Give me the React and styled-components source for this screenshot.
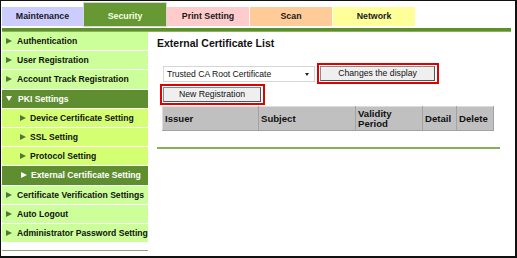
import React from 'react';
import styled, { createGlobalStyle } from 'styled-components';

const GlobalStyle = createGlobalStyle`
  html, body { margin: 0; padding: 0; background: #fff; }
  * { box-sizing: border-box; }
`;

const tabs = [
  { label: 'Maintenance', bg: '#ccccff' },
  { label: 'Security', bg: '#669933', active: true },
  { label: 'Print Setting', bg: '#ffcccc' },
  { label: 'Scan', bg: '#ffcc99' },
  { label: 'Network', bg: '#ffff99' },
];

const menu = [
  { label: 'Authentication' },
  { label: 'User Registration' },
  { label: 'Account Track Registration' },
  { label: 'PKI Settings', open: true, active: true },
  { label: 'Device Certificate Setting', sub: true },
  { label: 'SSL Setting', sub: true },
  { label: 'Protocol Setting', sub: true },
  { label: 'External Certificate Setting', sub: true, active: true },
  { label: 'Certificate Verification Settings' },
  { label: 'Auto Logout' },
  { label: 'Administrator Password Setting' },
];

const columns = [
  { label: 'Issuer', width: 96 },
  { label: 'Subject', width: 97 },
  { label: 'Validity Period', width: 67 },
  { label: 'Detail', width: 34 },
  { label: 'Delete', width: 37 },
];

const App = () => {
  return (
    <>
      <GlobalStyle />
      <Frame>
        <TabBar>
          {tabs.map((t) => (
            <Tab key={t.label} $bg={t.bg} $active={t.active}>
              {t.label}
            </Tab>
          ))}
        </TabBar>
        <GreenBar />
        <Body>
          <Side>
            <Menu>
              {menu.map((m) => (
                <MenuItem key={m.label} $sub={m.sub} $active={m.active}>
                  <Arrow $open={m.open} $active={m.active} />
                  {m.label}
                </MenuItem>
              ))}
            </Menu>
            <SideRule />
          </Side>
          <Main>
            <Title>External Certificate List</Title>
            <ControlRow>
              <Select>
                Trusted CA Root Certificate
                <SelectCaret />
              </Select>
              <Highlight>
                <Button $width={115}>Changes the display</Button>
              </Highlight>
            </ControlRow>
            <Highlight $left={-3}>
              <Button $width={98}>New Registration</Button>
            </Highlight>
            <Table>
              <thead>
                <tr>
                  {columns.map((c) => (
                    <Th key={c.label} $width={c.width}>{c.label}</Th>
                  ))}
                </tr>
              </thead>
            </Table>
            <MainRule />
          </Main>
        </Body>
      </Frame>
    </>
  );
};

const Frame = styled.div`
  width: 517px;
  height: 258px;
  border-style: solid;
  border-color: #111;
  border-width: 1px 2px 2px 1px;
  padding-left: 1px;
  display: flex;
  flex-direction: column;
  font-family: 'Liberation Sans', Arial, sans-serif;
  overflow: hidden;
`;

const TabBar = styled.div`
  display: flex;
  align-items: flex-end;
  gap: 1px;
  height: 25px;
`;

const Tab = styled.div`
  width: 82px;
  height: ${(p) => (p.$active ? '23px' : '19px')};
  padding-top: ${(p) => (p.$active ? '4px' : '0')};
  background: ${(p) => p.$bg};
  color: ${(p) => (p.$active ? '#f4ffe0' : '#1a1a1a')};
  font-size: 8.8px;
  font-weight: bold;
  line-height: 19px;
  text-align: center;
  box-shadow: ${(p) => (p.$active ? '0 0 0 1px #d8d8d8' : 'none')};
  &:first-child { width: 81px; }
`;

const GreenBar = styled.div`
  width: 509px;
  height: 3px;
  margin-top: 2px;
  background: #5e8f2c;
  border-bottom: 1px solid #86b45a;
  box-sizing: content-box;
`;

const Body = styled.div`
  display: flex;
  flex: 1;
`;

const Side = styled.div`
  width: 146px;
  display: flex;
  flex-direction: column;
`;

const Menu = styled.div`
  display: flex;
  flex-direction: column;
  gap: 1px;
`;

const MenuItem = styled.div`
  height: 18.2px;
  display: flex;
  align-items: center;
  gap: ${(p) => (p.$sub ? '4px' : '5px')};
  padding-left: ${(p) => (p.$sub ? (p.$active ? '19px' : '18px') : '4px')};
  background: ${(p) => (p.$active ? '#5f8e30' : p.$sub ? '#d4ff72' : '#ccff99')};
  color: ${(p) => (p.$active ? '#ffffff' : '#111')};
  font-size: 8.6px;
  font-weight: bold;
  white-space: nowrap;
`;

const Arrow = styled.span`
  width: 0;
  height: 0;
  flex-shrink: 0;
  border-style: solid;
  border-color: transparent;
  ${(p) =>
    p.$open
      ? `border-width: 5px 3px 0 3px; border-top-color: #fff; margin-right: 1px;`
      : `border-width: 3px 0 3px 6px; border-left-color: ${p.$active ? '#fff' : '#56733a'};`}
`;

const SideRule = styled.div`
  margin-top: 8px;
  height: 1px;
  background: #8ea476;
`;

const Main = styled.div`
  flex: 1;
  padding-left: 9px;
  display: flex;
  flex-direction: column;
  align-items: flex-start;
`;

const Title = styled.div`
  margin-top: 5px;
  font-size: 10.5px;
  font-weight: bold;
  line-height: 12px;
  color: #111;
`;

const ControlRow = styled.div`
  margin-top: 14px;
  display: flex;
  align-items: center;
  gap: 2px;
  padding-left: 6px;
`;

const Select = styled.div`
  position: relative;
  width: 152px;
  height: 16px;
  border: 1px solid #d6d6d6;
  background: #fff;
  font-size: 8.6px;
  line-height: 14px;
  padding-left: 3px;
  color: #111;
`;

const SelectCaret = styled.span`
  position: absolute;
  right: 5px;
  top: 6px;
  border-style: solid;
  border-color: #222 transparent transparent transparent;
  border-width: 3px 2.5px 0 2.5px;
`;

const Highlight = styled.div`
  border: 2px solid #e00000;
  padding: 1px 2px 1px 1px;
  margin-left: ${(p) => (p.$left !== undefined ? `${p.$left + 6}px` : '0')};
  display: flex;
`;

const Button = styled.div`
  width: ${(p) => p.$width}px;
  height: 15px;
  background: #efefef;
  border: 1px solid #8a8a8a;
  border-right-color: #555;
  border-bottom-color: #555;
  font-size: 8.7px;
  line-height: 13px;
  text-align: center;
  color: #111;
`;

const Table = styled.table`
  margin-top: 1px;
  margin-left: 5px;
  border-collapse: collapse;
  border-top: 1px solid #dcdcdc;
  border-left: 1px solid #dcdcdc;
`;

const Th = styled.th`
  width: ${(p) => p.$width}px;
  height: 24px;
  padding: 0 2px;
  background: #c0c0c0;
  border-right: 1px solid #a3a3a3;
  border-bottom: 1px solid #a3a3a3;
  font-size: 9.6px;
  font-weight: bold;
  line-height: 10px;
  text-align: left;
  vertical-align: middle;
  color: #111;
`;

const MainRule = styled.div`
  margin-top: 16px;
  width: 343px;
  height: 2px;
  background: #86b058;
`;

export default App;
